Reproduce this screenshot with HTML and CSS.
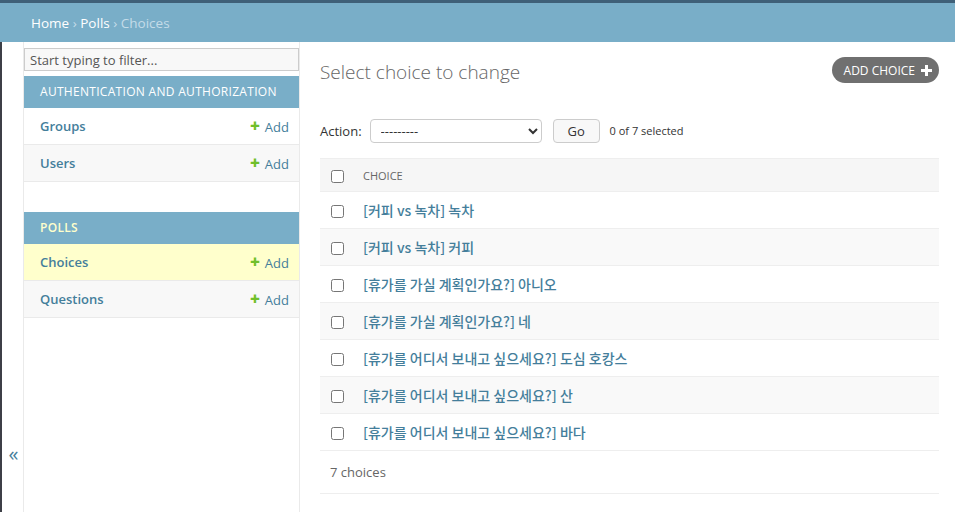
FILE: index.html
```html
<!DOCTYPE html>
<html lang="en">
<head>
  <meta charset="UTF-8">
  <title>Select choice to change | Django site admin</title>
  <link rel="stylesheet" href="styles.css">
</head>
<body>

  <div class="header-edge"></div>
  <div class="breadcrumbs">
    <a href="#">Home</a> &rsaquo; <a href="#">Polls</a> &rsaquo; <span class="current">Choices</span>
  </div>

  <div class="main">
    <button class="toggle-nav">&laquo;</button>

    <nav class="sidebar">
      <input class="nav-filter" type="search" placeholder="Start typing to filter...">

      <div class="module">
        <div class="caption">Authentication and Authorization</div>
        <div class="model-row">
          <a href="#">Groups</a>
          <a class="addlink" href="#"><span class="plus">+</span>Add</a>
        </div>
        <div class="model-row alt">
          <a href="#">Users</a>
          <a class="addlink" href="#"><span class="plus">+</span>Add</a>
        </div>
      </div>

      <div class="module">
        <div class="caption current-app">Polls</div>
        <div class="model-row current-model">
          <a href="#">Choices</a>
          <a class="addlink" href="#"><span class="plus">+</span>Add</a>
        </div>
        <div class="model-row alt">
          <a href="#">Questions</a>
          <a class="addlink" href="#"><span class="plus">+</span>Add</a>
        </div>
      </div>
    </nav>

    <div class="content">
      <div class="title-row">
        <h1>Select choice to change</h1>
        <a class="object-tool" href="#">Add choice
          <svg width="11" height="11" viewBox="0 0 11 11"><path d="M4 0h3v4h4v3H7v4H4V7H0V4h4z" fill="#fff"/></svg>
        </a>
      </div>

      <div class="actions">
        <label>Action:</label>
        <select>
          <option>---------</option>
        </select>
        <button class="go">Go</button>
        <span class="counter">0 of 7 selected</span>
      </div>

      <table class="results">
        <thead>
          <tr>
            <th class="check"><input type="checkbox"></th>
            <th>Choice</th>
          </tr>
        </thead>
        <tbody>
          <tr><td class="check"><input type="checkbox"></td><th><a href="#">[커피 vs 녹차] 녹차</a></th></tr>
          <tr><td class="check"><input type="checkbox"></td><th><a href="#">[커피 vs 녹차] 커피</a></th></tr>
          <tr><td class="check"><input type="checkbox"></td><th><a href="#">[휴가를 가실 계획인가요?] 아니오</a></th></tr>
          <tr><td class="check"><input type="checkbox"></td><th><a href="#">[휴가를 가실 계획인가요?] 네</a></th></tr>
          <tr><td class="check"><input type="checkbox"></td><th><a href="#">[휴가를 어디서 보내고 싶으세요?] 도심 호캉스</a></th></tr>
          <tr><td class="check"><input type="checkbox"></td><th><a href="#">[휴가를 어디서 보내고 싶으세요?] 산</a></th></tr>
          <tr><td class="check"><input type="checkbox"></td><th><a href="#">[휴가를 어디서 보내고 싶으세요?] 바다</a></th></tr>
        </tbody>
      </table>

      <p class="paginator">7 choices</p>
    </div>
  </div>

</body>
</html>
```

FILE: styles.css
```css
body {
  margin: 0;
  font-family: "Open Sans", "Noto Sans CJK KR", sans-serif;
  font-size: 13px;
  color: #333;
  background: #fff;
  overflow: hidden;
}
a {
  color: #447e9b;
  text-decoration: none;
}
.header-edge {
  height: 3px;
  background: #3f6078;
}
.breadcrumbs {
  height: 39px;
  line-height: 40px;
  padding-left: 31px;
  background: #79aec8;
  color: #c4dce8;
  font-size: 13.5px;
}
.breadcrumbs a {
  color: #fff;
}
.main {
  display: flex;
  height: 470px;
}
.toggle-nav {
  width: 24px;
  padding: 402px 0 0 2px;
  border: none;
  border-left: 2px solid #3d3f47;
  border-right: 1px solid #eaeaea;
  background: #fff;
  color: #447e9b;
  font-size: 20px;
  font-family: "Open Sans", sans-serif;
  line-height: 1;
  display: flex;
  justify-content: center;
  align-items: flex-start;
}
.sidebar {
  width: 275px;
  flex-shrink: 0;
  border-right: 1px solid #eaeaea;
  padding-top: 6px;
}
.nav-filter {
  display: block;
  width: 275px;
  height: 23px;
  box-sizing: border-box;
  margin: 0 0 5px 0;
  padding: 2px 5px;
  border: 1px solid #ccc;
  background: #f8f8f8;
  font-family: "Open Sans", sans-serif;
  font-size: 13px;
  color: #333;
  outline: none;
}
.nav-filter::placeholder {
  color: #555;
}
.module {
  margin-bottom: 30px;
}
.caption {
  height: 32px;
  line-height: 32px;
  padding-left: 16px;
  background: #79aec8;
  color: #fff;
  font-size: 12px;
  text-transform: uppercase;
  letter-spacing: 0.3px;
}
.caption.current-app {
  color: #ffc;
  font-weight: 600;
}
.model-row {
  display: flex;
  justify-content: space-between;
  height: 36px;
  line-height: 36px;
  padding: 0 10px 0 16px;
  border-bottom: 1px solid #eaeaea;
  font-size: 13px;
}
.model-row.alt {
  background: #f8f8f8;
}
.model-row.current-model {
  background: #ffc;
}
.model-row a {
  font-weight: 600;
}
.model-row .addlink {
  font-weight: 400;
}
.plus {
  color: #70bf2b;
  font-weight: 800;
  font-size: 17px;
  margin-right: 5px;
}
.content {
  flex: 1;
  padding: 0 16px 0 20px;
}
.title-row {
  display: flex;
  justify-content: space-between;
  align-items: flex-start;
  padding-top: 15px;
}
h1 {
  margin: 2px 0 0 0;
  font-size: 19px;
  font-weight: 300;
  color: #666;
}
.object-tool {
  display: flex;
  align-items: center;
  gap: 6px;
  height: 26px;
  box-sizing: border-box;
  padding: 0 7px 0 12px;
  border-radius: 13px;
  background: #707070;
  color: #fff;
  font-size: 12px;
  text-transform: uppercase;
}
.actions {
  display: flex;
  align-items: center;
  margin-top: 34px;
  height: 24px;
  color: #333;
}
.actions label {
  font-size: 13px;
}
.actions select {
  width: 172px;
  height: 24px;
  margin-left: 8px;
  padding: 0 6px;
  border: 1px solid #ccc;
  border-radius: 4px;
  background: #fff;
  font-family: "Open Sans", sans-serif;
  font-size: 13px;
  color: #333;
}
.go {
  width: 47px;
  height: 24px;
  margin-left: 11px;
  border: 1px solid #ccc;
  border-radius: 4px;
  background: #f8f8f8;
  font-family: "Open Sans", sans-serif;
  font-size: 13px;
  color: #333;
}
.counter {
  margin-left: 10px;
  font-size: 11px;
  color: #333;
  margin-top: -2px;
}
.results {
  width: 100%;
  margin-top: 15px;
  border-collapse: collapse;
}
.results thead th {
  height: 32px;
  background: #f6f6f6;
  border-top: 1px solid #eee;
  border-bottom: 1px solid #eee;
  text-align: left;
  font-size: 11px;
  font-weight: 400;
  color: #666;
  text-transform: uppercase;
  padding: 0;
}
.results tbody th,
.results tbody td {
  height: 36px;
  border-bottom: 1px solid #eee;
  text-align: left;
  font-weight: 400;
  padding: 0;
}
.results tbody tr:nth-child(even) {
  background: #f9f9f9;
}
.results tbody th a {
  font-family: "Noto Sans CJK KR", sans-serif;
  font-size: 14px;
  font-weight: 500;
}
.results .check {
  width: 13px;
  padding: 0 19px 0 11px;
}
.results input[type="checkbox"] {
  margin: 0;
  width: 13px;
  height: 13px;
  vertical-align: middle;
}
.paginator {
  margin: 0;
  height: 42px;
  line-height: 42px;
  padding-left: 10px;
  border-bottom: 1px solid #eee;
  color: #666;
  font-size: 13px;
}
```
